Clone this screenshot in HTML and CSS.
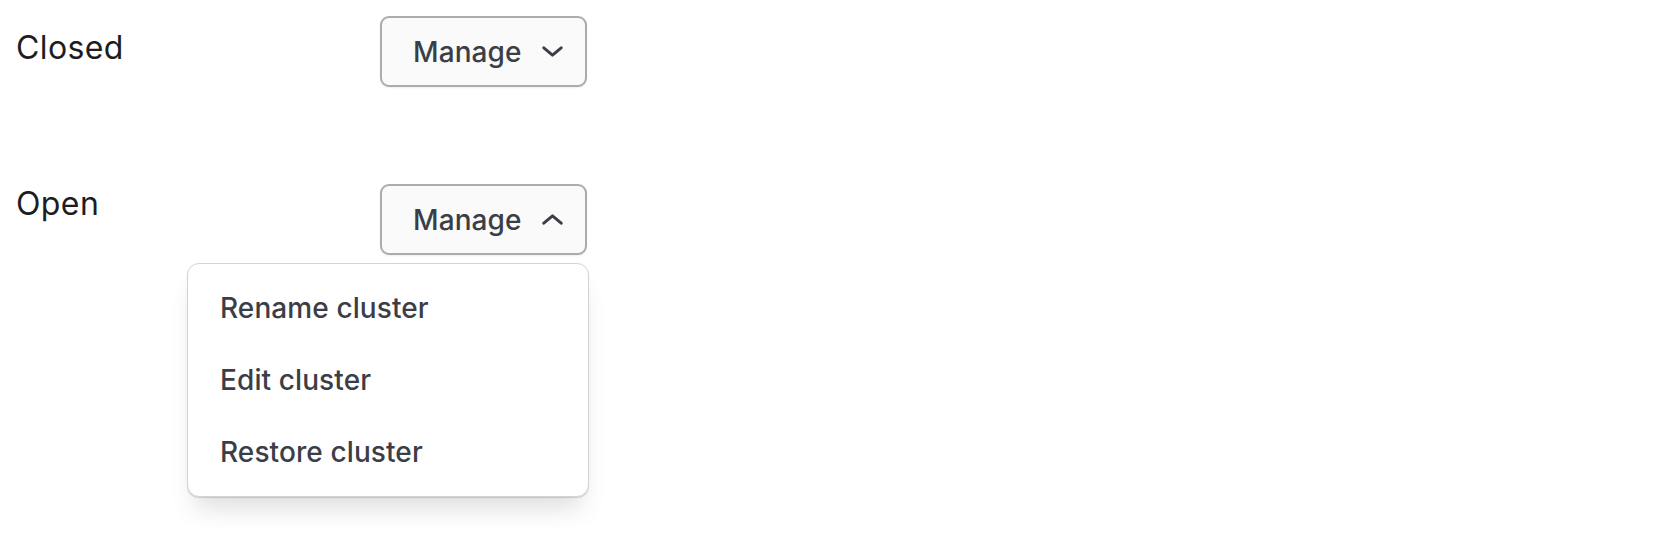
FILE: index.html
```html
<!DOCTYPE html>
<html lang="en">
<head>
<meta charset="utf-8">
<title>Manage dropdown</title>
<link rel="stylesheet" href="styles.css">
</head>
<body>
<div class="page">
  <div class="row">
    <div class="label label-closed">Closed</div>
    <div class="dropdown">
      <button class="trigger" type="button">
        <span class="trigger-text">Manage</span>
        <svg class="chevron" width="21" height="11" viewBox="0 0 21 11" aria-hidden="true">
          <path d="M1.8 1.8 L10.5 9.2 L19.2 1.8" fill="none" stroke="currentColor" stroke-width="2.9" stroke-linecap="round" stroke-linejoin="round"/>
        </svg>
      </button>
    </div>
  </div>
  <div class="row row-open">
    <div class="label">Open</div>
    <div class="dropdown">
      <button class="trigger" type="button">
        <span class="trigger-text">Manage</span>
        <svg class="chevron" width="21" height="11" viewBox="0 0 21 11" aria-hidden="true">
          <path d="M1.8 9.2 L10.5 1.8 L19.2 9.2" fill="none" stroke="currentColor" stroke-width="2.9" stroke-linecap="round" stroke-linejoin="round"/>
        </svg>
      </button>
      <div class="menu">
        <div class="menu-item">Rename cluster</div>
        <div class="menu-item">Edit cluster</div>
        <div class="menu-item">Restore cluster</div>
      </div>
    </div>
  </div>
</div>
</body>
</html>
```

FILE: styles.css
```css
* { box-sizing: border-box; }

html, body {
  margin: 0;
  padding: 0;
  background: #ffffff;
}

body {
  min-height: 100vh;
  font-family: Inter, "Noto Sans", "Liberation Sans", sans-serif;
  color: #1d1d1f;
}

.page {
  min-height: 100vh;
  padding: 16px 0 40px 0;
  display: flex;
  flex-direction: column;
  gap: 97px;
}

.row {
  display: flex;
  align-items: flex-start;
}

.label {
  flex: 0 0 380px;
  padding-left: 16px;
  font-size: 32px;
  line-height: 40px;
  font-weight: 400;
  letter-spacing: 0.4px;
  color: #1d1d1f;
}

.label-closed {
  margin-top: 12px;
}

.dropdown {
  display: flex;
  flex-direction: column;
  align-items: flex-end;
  width: 207px;
}

.trigger {
  display: flex;
  align-items: center;
  gap: 20px;
  width: 207px;
  height: 71px;
  padding: 0 24px 0 31px;
  margin: 0;
  background: #fafafa;
  border: 2px solid #acacb0;
  border-radius: 9px;
  box-shadow: 0 1px 2px rgba(0, 0, 0, 0.07);
  font-family: inherit;
  color: #3b3e46;
  cursor: pointer;
}

.trigger-text {
  font-size: 28px;
  line-height: 36px;
  font-weight: 500;
  letter-spacing: 0.1px;
}

.chevron {
  display: block;
  flex: 0 0 auto;
}

.menu {
  flex: 0 0 auto;
  width: 402px;
  margin: 8px -2px 0 0;
  padding: 8px 0;
  background: #ffffff;
  border: 1px solid #d4d4d8;
  border-radius: 12px;
  box-shadow: 0 1px 1px rgba(0, 0, 0, 0.14), 0 18px 26px -8px rgba(0, 0, 0, 0.14);
}

.menu-item {
  height: 72px;
  padding: 18px 32px;
  font-size: 28px;
  line-height: 36px;
  font-weight: 500;
  color: #3b3e46;
  letter-spacing: 0.1px;
}
```
